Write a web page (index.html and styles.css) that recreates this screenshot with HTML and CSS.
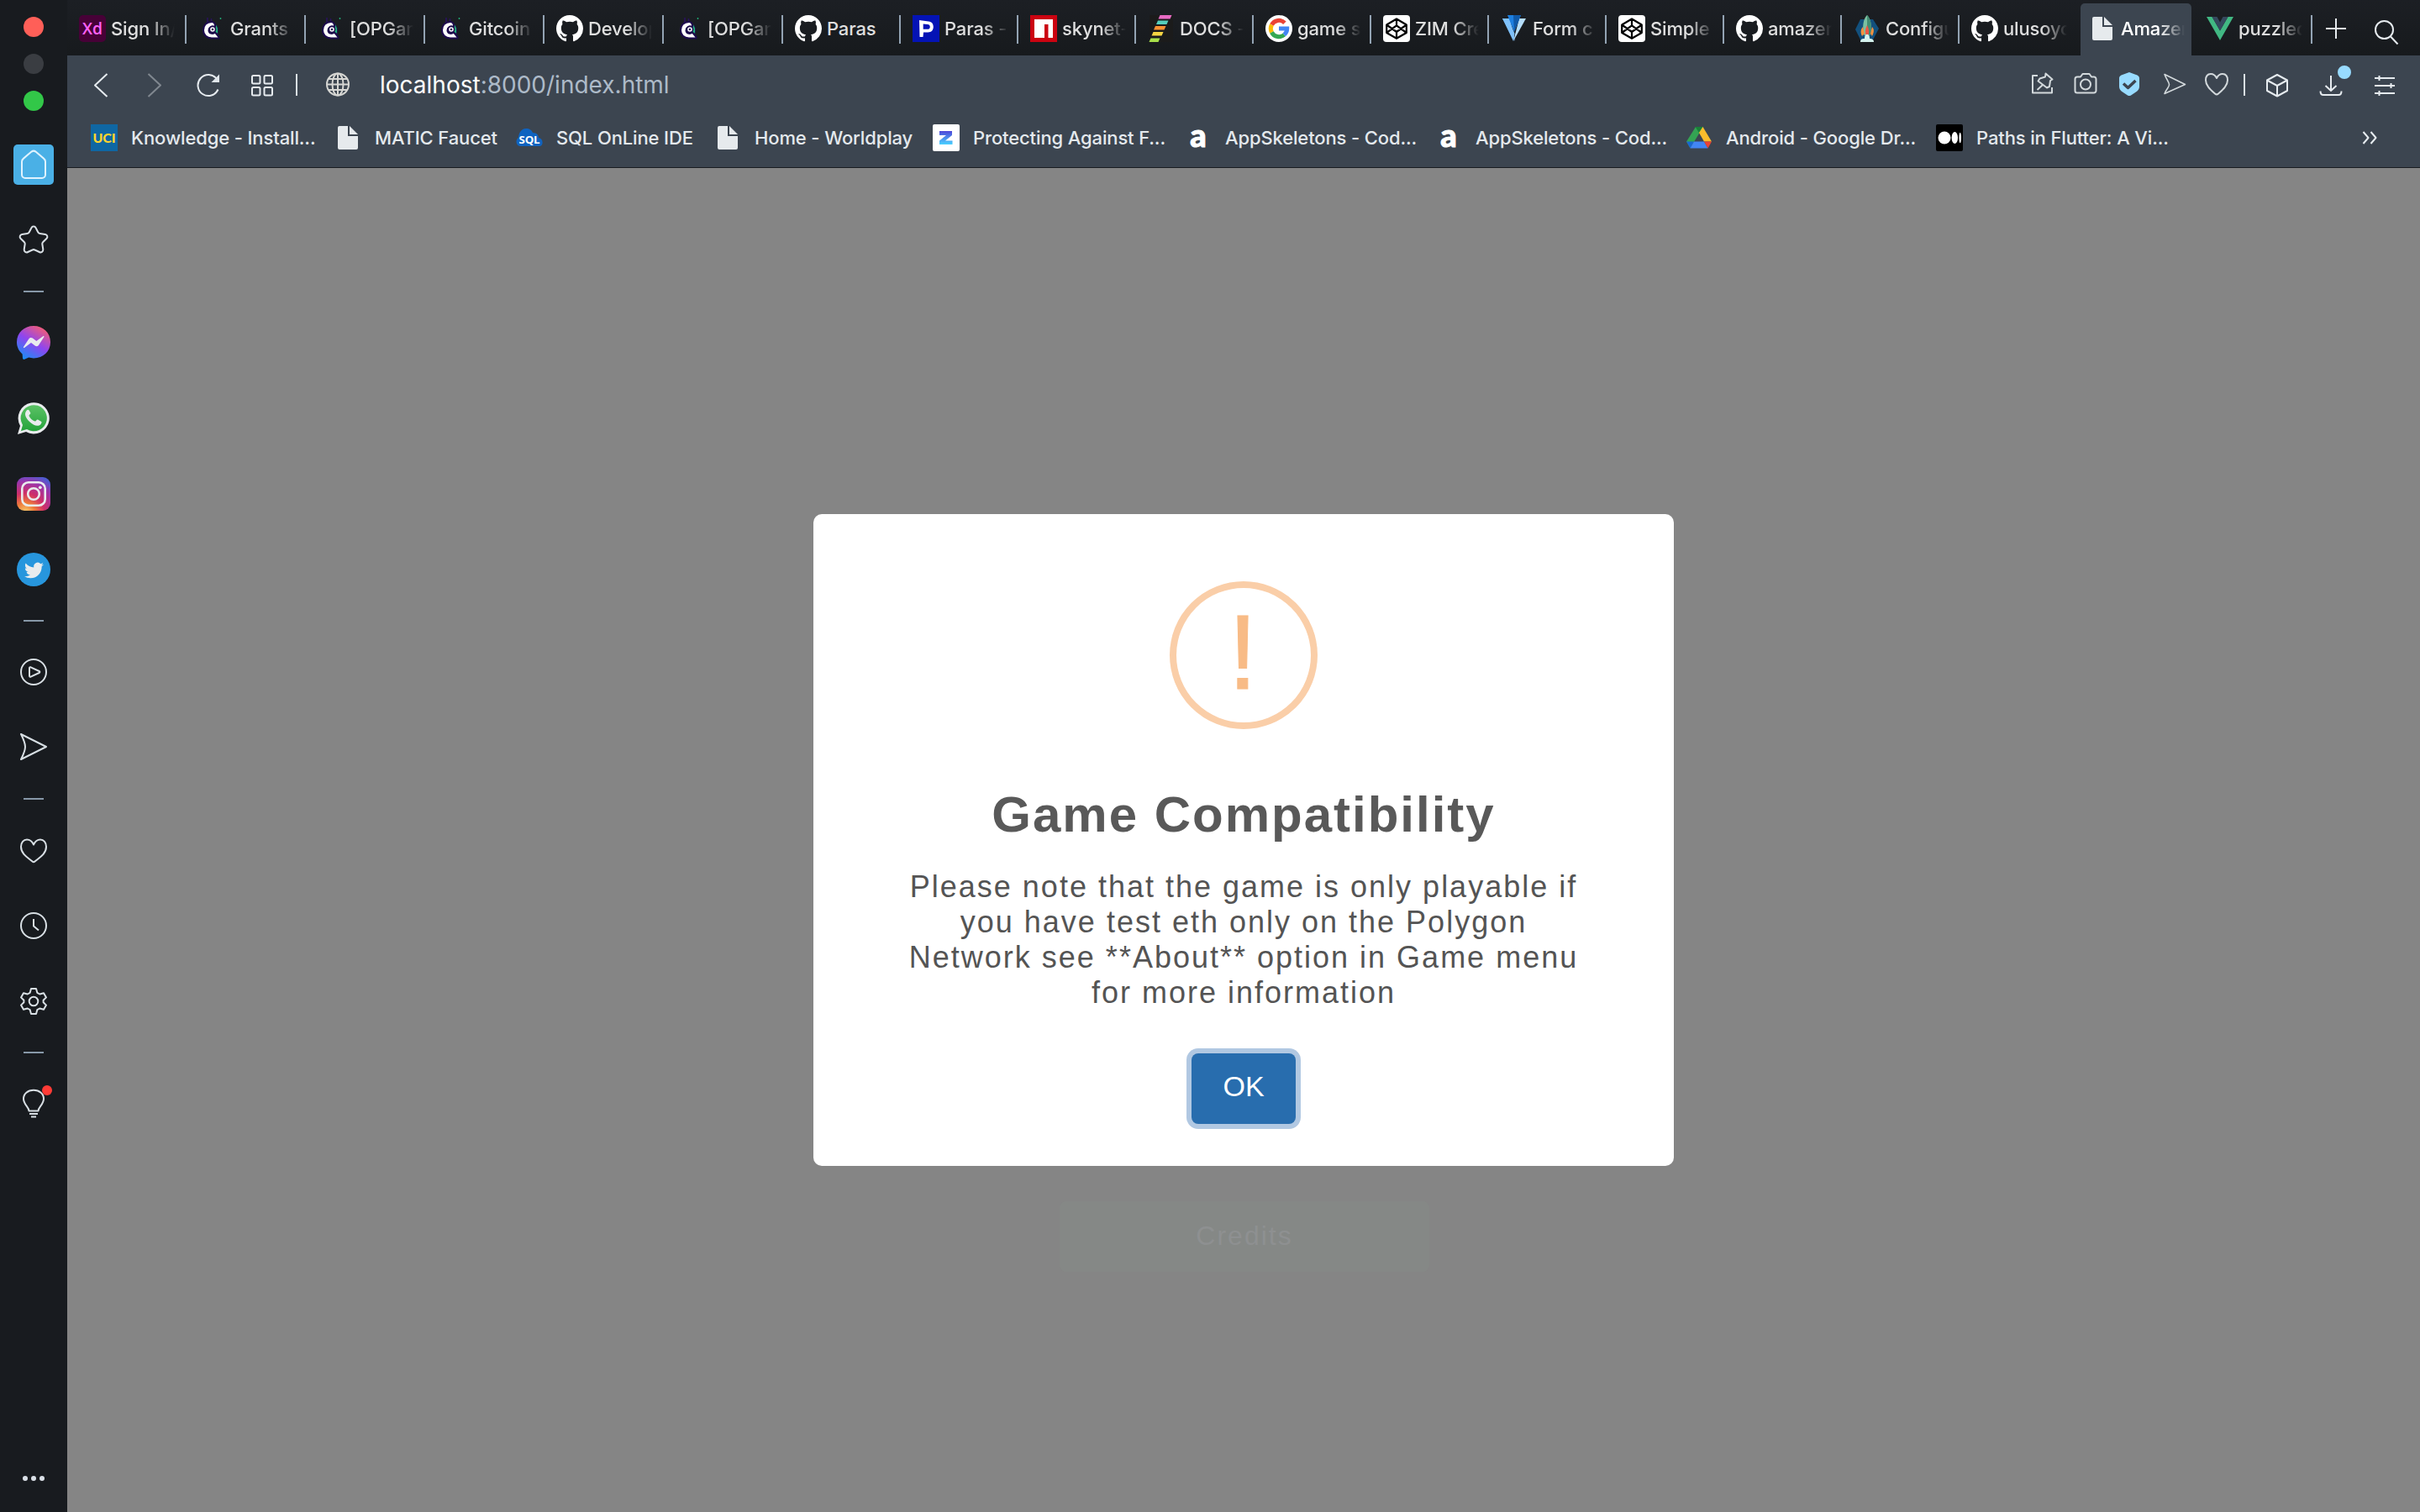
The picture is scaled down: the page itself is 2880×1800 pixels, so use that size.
FILE: index.html
```html
<!DOCTYPE html>
<html lang="en">
<head>
<meta charset="utf-8">
<title>Amazeng</title>
<link rel="stylesheet" href="styles.css">
</head>
<body>
<svg class="defs" width="0" height="0" aria-hidden="true">
  <defs>
    <linearGradient id="gMsg" x1="0.2" y1="1" x2="0.8" y2="0"><stop offset="0" stop-color="#1590f5"/><stop offset=".5" stop-color="#8f45ef"/><stop offset="1" stop-color="#fb5f6c"/></linearGradient>
    <linearGradient id="gWa" x1="0" y1="0" x2="0" y2="1"><stop offset="0" stop-color="#5cc266"/><stop offset="1" stop-color="#24a33a"/></linearGradient>
    <radialGradient id="gIg" cx=".25" cy="1.05" r="1.15"><stop offset="0" stop-color="#f7d070"/><stop offset=".25" stop-color="#ee7b3a"/><stop offset=".5" stop-color="#cf2f68"/><stop offset=".8" stop-color="#9a35ac"/><stop offset="1" stop-color="#4f5bd0"/></radialGradient>
    <linearGradient id="gZ" x1="0" y1="0" x2="0" y2="1"><stop offset="0" stop-color="#4f46d8"/><stop offset="1" stop-color="#4ad2ff"/></linearGradient>
    <symbol id="github" viewBox="0 0 16 16"><path fill="#fff" d="M8 0C3.58 0 0 3.58 0 8c0 3.54 2.29 6.53 5.47 7.59.4.07.55-.17.55-.38 0-.19-.01-.82-.01-1.49-2.01.37-2.53-.49-2.69-.94-.09-.23-.48-.94-.82-1.13-.28-.15-.68-.52-.01-.53.63-.01 1.08.58 1.23.82.72 1.21 1.87.87 2.33.66.07-.52.28-.87.51-1.07-1.78-.2-3.64-.89-3.64-3.95 0-.87.31-1.59.82-2.15-.08-.2-.36-1.02.08-2.12 0 0 .67-.21 2.2.82.64-.18 1.32-.27 2-.27.68 0 1.36.09 2 .27 1.53-1.04 2.2-.82 2.2-.82.44 1.1.16 1.92.08 2.12.51.56.82 1.27.82 2.15 0 3.07-1.87 3.75-3.65 3.95.29.25.54.73.54 1.48 0 1.07-.01 1.93-.01 2.2 0 .21.15.46.55.38A8.013 8.013 0 0016 8c0-4.42-3.58-8-8-8z"/></symbol>
    <symbol id="gitcoin" viewBox="0 0 32 32"><path d="M11 3v6M15.500 4v4" stroke="#2a1260" stroke-width="1.500"/><path d="M19.500 10.500c4 2 5 7 3.500 12L18 19z" fill="#22b57c" stroke="#1d0b4d" stroke-width="1"/><path d="M16 8C9.500 8 6 12.500 6 18s4 9.500 10 9.500h8.500V26L20 20.500c-3.500 3-7.500 1-7.500-2.500s3.500-5.500 7.500-4C20.500 10.500 18.500 8 16 8z" fill="#fff" stroke="#1d0b4d" stroke-width="2" stroke-linejoin="round"/><circle cx="17" cy="17" r="3.600" fill="#fff" stroke="#1d0b4d" stroke-width="1.600"/><circle cx="17" cy="17" r="1.300" fill="#1d0b4d"/><circle cx="26.500" cy="4" r=".9" fill="#22b57c"/></symbol>
    <symbol id="codepen" viewBox="0 0 32 32"><rect width="32" height="32" rx="4" fill="#fff"/><path d="M16 4.500 27.800 11.500v9.500L16 27.800 4.200 21v-9.500zM16 4.500v7.800m0 7.700v7.800M4.200 11.500 16 20l11.800-8.500M4.200 21 16 12.300 27.800 21" fill="none" stroke="#000" stroke-width="2.200" stroke-linejoin="round"/></symbol>
    <symbol id="page" viewBox="0 0 32 32"><path fill="#e6eaed" d="M6 2h10v12h12v14a2 2 0 0 1-2 2H6a2 2 0 0 1-2-2V4a2 2 0 0 1 2-2z"/><path fill="#e6eaed" d="M18 2l10 10H18z"/></symbol>
    <symbol id="lettera" viewBox="0 0 32 32"><text x="16" y="26.500" text-anchor="middle" font-family="Lato, sans-serif" font-weight="900" font-size="38" fill="#fff" stroke="#fff">a</text></symbol>
  </defs>
</svg>

<div class="browser">
  <aside class="sidebar">
    <div class="lights"><i class="light red"></i><i class="light gray"></i><i class="light green"></i></div>
    <nav class="side-items">
      <div class="side-item"><span class="home"><svg width="32" height="36" viewBox="0 0 32 36"><path d="M13.500 2.600a4 4 0 0 1 5 0l9.500 8a5 5 0 0 1 2 4V30a4 4 0 0 1-4 4H6a4 4 0 0 1-4-4V14.600a5 5 0 0 1 2-4z" fill="none" stroke="#dff3ff" stroke-width="2"/></svg></span></div>
      <div class="side-item"><svg class="line" width="40" height="40" viewBox="0 0 40 40"><path d="M17.400 5.300c1-2.400 4.200-2.400 5.200 0l2.700 5.200c.4.800 1 1.300 2 1.400l6.500 1.100c2.600.5 3.400 3.300 1.600 5l-4.300 4.300c-.6.600-.9 1.400-.8 2.200l1 6.400c.3 2.600-2.300 4.300-4.500 3.100l-5.400-2.500a3 3 0 0 0-2.800 0L13.200 34c-2.200 1.200-4.800-.5-4.500-3.100l1-6.400c.1-.8-.2-1.600-.8-2.200L4.600 18c-1.800-1.700-1-4.500 1.600-5l6.500-1.100c1-.1 1.600-.6 2-1.400z"/></svg></div>
      <hr class="side-rule">
      <div class="side-item"><svg width="40" height="40" viewBox="0 0 40 40"><path d="M20 0C8.600 0 0 8.200 0 19.200c0 5.800 2.500 10.700 6.600 14.200L7 38.500c.1 1.100 1.200 1.700 2.200 1.300l5-2.200c1.900.5 3.800.8 5.800.8 11.400 0 20-8.200 20-19.200S31.400 0 20 0z" fill="url(#gMsg)"/><path d="M8 25l6.300-9.600a3 3 0 0 1 4.500-.8l4.500 3.400 8-5.800c.7-.5 1.500.3 1 1l-6.200 9.500a3 3 0 0 1-4.500.8l-4.600-3.400-8 5.900c-.7.500-1.500-.3-1-1z" fill="#e9ecee"/></svg></div>
      <div class="side-item"><svg width="40" height="40" viewBox="0 0 40 40"><path d="M1 39l3-10A18.600 18.600 0 1 1 11 36z" fill="#e9ecee"/><path d="M5 35l2-7A15.600 15.600 0 1 1 12 33z" fill="url(#gWa)"/><path d="M14.600 10.600c-.6-1.300-2-.9-2.800-.1-4 4.400-.7 9.700 3.600 13.800 4.200 4 9.600 6.200 13 2.900.9-.9 1.500-2.400.9-3.100l-4.300-2.500c-1.500-.6-2 2.300-3.500 2-3-1-6-4-7-6.600-.1-1.400 2.300-1.900 1.800-3.400z" fill="#e9ecee"/></svg></div>
      <div class="side-item"><svg width="40" height="40" viewBox="0 0 40 40"><rect width="40" height="40" rx="9" fill="url(#gIg)"/><g fill="none" stroke="#e9ecee" stroke-width="2.600"><rect x="6.300" y="6.300" width="27.400" height="27.400" rx="7.500"/><circle cx="20" cy="20" r="6.800"/></g><circle cx="27.800" cy="12.300" r="1.900" fill="#e9ecee"/></svg></div>
      <div class="side-item"><svg width="40" height="40" viewBox="0 0 40 40"><circle cx="20" cy="20" r="20" fill="#2796dd"/><svg x="9" y="9.500" width="23" height="23" viewBox="0 0 24 24"><path fill="#e9ecee" d="M23.953 4.570a10 10 0 01-2.825.775 4.958 4.958 0 002.163-2.723c-.951.555-2.005.959-3.127 1.184a4.920 4.920 0 00-8.384 4.482C7.690 8.095 4.067 6.130 1.640 3.162a4.822 4.822 0 00-.666 2.475c0 1.710.870 3.213 2.188 4.096a4.904 4.904 0 01-2.228-.616v.060a4.923 4.923 0 003.946 4.827 4.996 4.996 0 01-2.212.085 4.936 4.936 0 004.604 3.417 9.867 9.867 0 01-6.102 2.105c-.390 0-.779-.023-1.170-.067a13.995 13.995 0 007.557 2.209c9.053 0 13.998-7.496 13.998-13.985 0-.210 0-.420-.015-.630A9.935 9.935 0 0024 4.590z"/></svg></svg></div>
      <hr class="side-rule">
      <div class="side-item"><svg class="line" width="40" height="40" viewBox="0 0 40 40"><circle cx="20" cy="20" r="15"/><path d="M15 15.500c0-1 .8-1.500 1.600-1.200l10 4.700c1 .5 1 1.500 0 2l-10 4.700c-.8.300-1.600-.2-1.600-1.200z"/></svg></div>
      <div class="side-item"><svg class="line up1" width="40" height="40" viewBox="0 0 40 40"><path d="M5 5l30 15L5 35c3-6 5-10 5-15S8 11 5 5z"/></svg></div>
      <hr class="side-rule">
      <div class="side-item"><svg class="line" width="40" height="40" viewBox="0 0 40 40"><path d="M20 13.500C17.500 8 14 7.500 12 7.500 8 7.500 5 11 5 16c0 9 9 13.500 13.500 17.500a2.200 2.200 0 0 0 3 0C26 29.500 35 25 35 16c0-5-3-8.500-7-8.500-2 0-5.500.5-8 6z"/></svg></div>
      <div class="side-item"><svg class="line" width="40" height="40" viewBox="0 0 40 40"><circle cx="20" cy="20" r="15"/><path d="M20 12v8.500l6 5"/></svg></div>
      <div class="side-item"><svg class="line" width="40" height="40" viewBox="0 0 40 40"><path d="M17 5h6l1.300 4.800 3 1.700 4.700-1.300 3 5.200-3.400 3.300v2.600l3.400 3.300-3 5.200-4.700-1.300-3 1.700L23 35h-6l-1.300-4.800-3-1.700L8 29.800l-3-5.200 3.400-3.300v-2.600L5 15.400l3-5.200 4.700 1.300 3-1.700z"/><circle cx="20" cy="20" r="5.300"/></svg></div>
      <hr class="side-rule">
      <div class="side-item"><svg class="line" width="40" height="40" viewBox="0 0 40 40"><path d="M14.500 28.500c0-4.500-6.500-7.500-6.500-14.500C8 8 13 3.800 20 3.800S32 8 32 14c0 7-6.500 10-6.500 14.500zM15 32h10M17 35.500h6"/></svg><i class="alert"></i></div>
    </nav>
    <div class="more"><i></i><i></i><i></i></div>
  </aside>

  <main class="window">
    <header class="chrome">
      <div class="tabs">
        <div class="tab wide"><svg class="fav" viewBox="0 0 32 32"><rect width="32" height="32" rx="5" fill="#470137"/><text x="16" y="22.500" text-anchor="middle" font-family="Open Sans, sans-serif" font-weight="600" font-size="20" textLength="24" lengthAdjust="spacingAndGlyphs" fill="#ff61f6">Xd</text></svg><span>Sign In/U</span></div>
        <div class="tab wide"><svg class="fav"><use href="#gitcoin"/></svg><span>Grants</span></div>
        <div class="tab wide"><svg class="fav"><use href="#gitcoin"/></svg><span>[OPGam</span></div>
        <div class="tab wide"><svg class="fav"><use href="#gitcoin"/></svg><span>Gitcoin</span></div>
        <div class="tab wide"><svg class="fav"><use href="#github"/></svg><span>Develop</span></div>
        <div class="tab wide"><svg class="fav"><use href="#gitcoin"/></svg><span>[OPGam</span></div>
        <div class="tab"><svg class="fav"><use href="#github"/></svg><span class="full">Paras</span></div>
        <div class="tab"><svg class="fav" viewBox="0 0 32 32"><rect width="32" height="32" fill="#0413b5"/><path d="M8 6l11 1.500c4 .5 5.800 2.800 5.800 6.500s-2.300 6.500-6.500 6.500H13l-.5 5.500H8.500zM12.700 10.500v6.300h4.800c2 0 3.300-.9 3.300-2.900s-1.200-2.700-3-2.900z" fill="#fff" fill-rule="evenodd"/></svg><span>Paras -</span></div>
        <div class="tab"><svg class="fav" viewBox="0 0 32 32"><rect width="32" height="32" fill="#cb0311"/><path d="M5 5h22v22h-5.500V11H17v16H5z" fill="#fff"/></svg><span>skynet-</span></div>
        <div class="tab"><svg class="fav" viewBox="0 0 32 32"><rect x="2" width="28" height="32" fill="#1b1b1b"/><path d="M14.500 0h14l-2 4.500h-14z" fill="#e86bc4"/><path d="M12 6.500h12.500l-2 4.500H10z" fill="#55cdbb"/><path d="M9 13h12.500l-2 4.500H7z" fill="#fa9132"/><path d="M6.500 20h12l-2 4.500H4.500z" fill="#f5d543"/><path d="M3.500 27.500h11l-2 4.500H1.500z" fill="#a8e04a"/></svg><span>DOCS -</span></div>
        <div class="tab"><svg class="fav" viewBox="0 0 32 32"><circle cx="16" cy="16" r="16" fill="#fff"/><g fill="none" stroke-width="5"><path d="M7.400 11.500A9.700 9.700 0 0 1 22.900 9.200" stroke="#ea4335"/><path d="M7.400 20.500a9.700 9.700 0 0 1 0-9" stroke="#fbbc05"/><path d="M22.300 23.400a9.700 9.700 0 0 1-14.900-2.900" stroke="#34a853"/><path d="M16 16h9.700c0 3-1.300 5.600-3.400 7.400" stroke="#4285f4"/></g></svg><span>game s</span></div>
        <div class="tab"><svg class="fav"><use href="#codepen"/></svg><span>ZIM Cre</span></div>
        <div class="tab"><svg class="fav" viewBox="0 0 32 32"><path d="M2 4h9l6 27z" fill="#7fc1fb"/><path d="M30 4h-8l-7 27z" fill="#b5defc"/><path d="M8 0h16l-8 20z" fill="#1d7fe0"/><path d="M15 0h9l-8 20z" fill="#1059a8"/><path d="M2 4h7l7.500 18L15 31z" fill="#7fc1fb"/></svg><span>Form c</span></div>
        <div class="tab"><svg class="fav"><use href="#codepen"/></svg><span>Simple</span></div>
        <div class="tab"><svg class="fav"><use href="#github"/></svg><span>amazen</span></div>
        <div class="tab"><svg class="fav" viewBox="0 0 32 32"><path d="M8 5h15l7 11-8 15H9L2 17z" fill="#12507d"/><path d="M16 0c5 5 6 14 3.500 24h-7C10 14 11 5 16 0z" fill="#7bc0a1"/><path d="M16 0c5 5 6 14 3.500 24H16z" fill="#438c72"/><path d="M11 14c-3 3-3 7-1 11l3-3zM22 14c3 3 2 7 0 11l-2-3z" fill="#f4923f"/><path d="M16 12c2 4 3 8 1 13h-2c-2-5-1-9 1-13z" fill="#ee5545"/><path d="M8 32c0-4 3-4 5-4 0-4 1-5 3-5s3 1 3 5c3 0 5 1 5 4z" fill="#d5f3ee"/></svg><span>Configu</span></div>
        <div class="tab plain"><svg class="fav"><use href="#github"/></svg><span>ulusoyc</span></div>
        <div class="tab active"><svg class="fav"><use href="#page"/></svg><span>Amazen</span></div>
        <div class="tab"><svg class="fav" viewBox="0 0 32 32"><path d="M0 2h6.500L16 18.500 25.500 2H32L16 30z" fill="#41b883"/><path d="M6.500 2h6L16 8.500 19.500 2h6L16 18.500z" fill="#35495e"/></svg><span>puzzled</span></div>
        <div class="tab-tools">
          <svg class="ico" viewBox="0 0 32 32"><path d="M16 4v24M4 16h24"/></svg>
          <svg class="ico search" viewBox="0 0 32 32"><circle cx="13.500" cy="13.500" r="10.500"/><path d="M21 21.500l8.500 9"/></svg>
        </div>
      </div>

      <div class="toolbar">
        <div class="nav">
          <svg class="ico" viewBox="0 0 32 32"><path d="M23.500 3L9 16.500 23.500 30"/></svg>
          <svg class="ico dim" viewBox="0 0 32 32"><path d="M8.500 3L23 16.500 8.500 30"/></svg>
          <svg class="ico" viewBox="0 0 32 32"><path d="M27.500 21.500A12.500 12.500 0 1 1 26 9"/><path d="M29 3.500V13h-9.500z" fill="#e0e6eb" stroke="none"/></svg>
          <svg class="ico" viewBox="0 0 32 32"><rect x="4" y="5" width="9.500" height="9.500" rx="1.500"/><rect x="18.500" y="5" width="9.500" height="9.500" rx="1.500"/><rect x="4" y="19" width="9.500" height="9.500" rx="1.500"/><rect x="18.500" y="19" width="9.500" height="9.500" rx="1.500"/></svg>
          <i class="bar"></i>
          <svg class="ico globe" viewBox="0 0 32 32"><circle cx="16" cy="15.500" r="13"/><ellipse cx="16" cy="15.500" rx="6.500" ry="13"/><path d="M16 2.500v26M3 15.500h26M5 9h22M5 22h22"/></svg>
          <span class="url"><b>localhost</b>:8000/index.html</span>
        </div>
        <div class="actions">
          <svg class="ico soft pin" viewBox="0 0 32 32"><path d="M11 5H5v20.500h23V19"/><path d="M20.500 2.500l8 7-2.500 1.500-1 7-3 1.500-10.500-8 2-3 6.500-2zM17 16l-6.500 6"/></svg>
          <svg class="ico soft" viewBox="0 0 32 32"><path d="M6 6.500h4l2.500-3.500h8L23 6.500h3a2.500 2.500 0 0 1 2.500 2.500v14a2.500 2.500 0 0 1-2.500 2.500H6A2.500 2.500 0 0 1 3.500 23V9A2.500 2.500 0 0 1 6 6.500z"/><circle cx="16" cy="15.500" r="6"/></svg>
          <svg class="ico" viewBox="0 0 32 32"><path d="M16 1l9.500 3.500C27 5.200 28 6.500 28 8v10c0 3-1.500 5-4 6.500l-6 4a4 4 0 0 1-4 0l-6-4C5.500 23 4 21 4 18V8c0-1.500 1-2.800 2.500-3.500z" fill="#98dbff" stroke="none"/><path d="M9 14.500l5.500 5L23.500 11" stroke="#3c4550" stroke-width="3.500"/></svg>
          <svg class="ico soft thin send" viewBox="0 0 32 32"><path d="M4 3.500l24.500 12L4 26.500c3-7 6-8 5.500-11C9 12 6.500 10 4 3.500z"/></svg>
          <svg class="ico soft heart" viewBox="0 0 32 32"><path d="M16 8c-2-4-4.500-5-7-5-4 0-6 3-6 7.500C3 17 9 22 14 26.500a3 3 0 0 0 4 0C23 22 29 17 29 10.500 29 6 27 3 23 3c-2.500 0-5 1-7 5z"/></svg>
          <i class="bar"></i>
          <svg class="ico cube" viewBox="0 0 32 32"><path d="M16 4l12 6.500v12.500L16 29.500 4 23V10.500zM4 10.500L16 17l12-6.500M16 17v12.500"/></svg>
          <span class="download"><svg class="ico" viewBox="0 0 32 32"><path d="M16 5v18M9.500 17l6.500 6 6.500-6M3.500 23.500c0 3 1 4.500 3.500 4.500h18c2.500 0 3.500-1.500 3.500-4.500"/></svg><i class="badge"></i></span>
          <svg class="ico sliders" viewBox="0 0 32 32"><path d="M4 8h24M4 17h24M4 26h24M9.500 5v6M23.500 14v6M9.500 23v6"/></svg>
        </div>
      </div>

      <div class="bookmarks">
        <div class="mark w290"><svg class="fav" viewBox="0 0 32 32"><rect width="32" height="32" fill="#0f67a3"/><text x="16" y="21.500" text-anchor="middle" font-family="Lato, sans-serif" font-weight="900" font-size="15" textLength="27" lengthAdjust="spacingAndGlyphs" fill="#ffd52e">UCI</text></svg><span>Knowledge - Install...</span></div>
        <div class="mark w216"><svg class="fav"><use href="#page"/></svg><span>MATIC Faucet</span></div>
        <div class="mark w236"><svg class="fav" viewBox="0 0 32 32"><path d="M5 26c-5 0-6-8-2-10 0-5 3-11 9-11 4 0 7 2 8 5 5 0 7 3 7 6 6 1 6 10 1 10z" fill="#0f63c0"/><text x="16" y="23" text-anchor="middle" font-family="Open Sans, sans-serif" font-weight="700" font-size="12.500" textLength="25" lengthAdjust="spacingAndGlyphs" fill="#fff">SQL</text></svg><span>SQL OnLine IDE</span></div>
        <div class="mark w260"><svg class="fav"><use href="#page"/></svg><span>Home - Worldplay</span></div>
        <div class="mark w300"><svg class="fav" viewBox="0 0 32 32"><rect width="32" height="32" rx="2" fill="#fff"/><path d="M8 8h15v5l-8 6.500h8.500V24H8v-4.500l8-6.500H8z" fill="url(#gZ)"/></svg><span>Protecting Against F...</span></div>
        <div class="mark w298"><svg class="fav"><use href="#lettera"/></svg><span>AppSkeletons - Cod...</span></div>
        <div class="mark w298"><svg class="fav"><use href="#lettera"/></svg><span>AppSkeletons - Cod...</span></div>
        <div class="mark w298"><svg class="fav" viewBox="0 0 32 32"><path d="M12 3h9l-12 19.500-3.500 6L1 20.500z" fill="#34a353"/><path d="M11.500 3h9L16 10z" fill="#188038"/><path d="M20.500 3L31 20.500h-9L16 10z" fill="#fbbc2c"/><path d="M1 20.500h9L5.500 28.500z" fill="#1967d2"/><path d="M10 20.500h12l4.500 8h-21z" fill="#4285f4"/><path d="M22 20.500h9l-4.500 8z" fill="#ea4335"/></svg><span>Android - Google Dr...</span></div>
        <div class="mark w298"><svg class="fav" viewBox="0 0 32 32"><rect width="32" height="32" rx="2" fill="#000"/><ellipse cx="10" cy="16" rx="7.500" ry="7.500" fill="#fff"/><ellipse cx="22.300" cy="16" rx="3.700" ry="7" fill="#fff"/><ellipse cx="28.700" cy="16" rx="1.300" ry="6.300" fill="#fff"/></svg><span>Paths in Flutter: A Vi...</span></div>
        <svg class="ico overflow" viewBox="0 0 32 32"><path d="M8.500 9l6 7-6 7M17.500 9l6 7-6 7"/></svg>
      </div>
    </header>

    <section class="page">
      <div class="game-button">Credits</div>
      <div class="overlay">
        <div class="dialog">
          <div class="warn">!</div>
          <h2>Game Compatibility</h2>
          <p>Please note that the game is only playable if<br>you have test eth only on the Polygon<br>Network see **About** option in Game menu<br>for more information</p>
          <button class="ok">OK</button>
        </div>
      </div>
    </section>
  </main>
</div>
</body>
</html>
```
FILE: styles.css
```css
* { box-sizing: border-box; }
body { margin: 0; background: #858585; font-family: Inter, sans-serif; }
.defs { display: block; position: absolute; }
svg { display: block; flex: none; }
.browser { display: flex; width: 2880px; height: 1800px; overflow: hidden; }

/* Sidebar */
.sidebar { width: 80px; flex: none; background: #181b1f; display: flex; flex-direction: column; align-items: center; }
.lights { display: flex; flex-direction: column; gap: 20px; padding-top: 20px; height: 151px; }
.light { width: 24px; height: 24px; border-radius: 50%; }
.red { background: #ff5f58; }
.gray { background: #3a3d42; }
.green { background: #32c748; }
.side-items { width: 80px; }
.side-item { height: 90px; display: flex; align-items: center; justify-content: center; position: relative; }
.side-rule { width: 24px; height: 2px; margin: 15px auto; border: 0; background: #8798a8; }
.home { width: 48px; height: 48px; border-radius: 5px; background: #4ab0e6; display: flex; align-items: center; justify-content: center; }
.line { fill: none; stroke: #d8dfe4; stroke-width: 2; stroke-linejoin: round; }
.up1 { margin-bottom: 2px; }
.alert { position: absolute; left: 50px; top: 23px; width: 12px; height: 12px; border-radius: 50%; background: #ff3b36; }
.more { margin-top: auto; padding-bottom: 37px; display: flex; gap: 4px; }
.more i { width: 6px; height: 6px; border-radius: 50%; background: #d9dfe6; }

/* Browser chrome */
.window { flex: 1; min-width: 0; display: flex; flex-direction: column; }
.chrome { height: 200px; flex: none; background: #3c4550; border-bottom: 1px solid #191c20; }
.tabs { height: 66px; display: flex; background: linear-gradient(#1c1f24, #171a1d); }
.tab { width: 140px; height: 68px; padding: 0 0 0 14px; display: flex; align-items: center; gap: 6px; flex: none; position: relative; }
.tab::after { content: ""; position: absolute; right: 0; top: 18px; width: 2px; height: 34px; background: #93a3b3; }
.tab.wide { width: 142px; }
.tab.plain::after, .tab.active::after { display: none; }
.tab span { width: 76px; overflow: hidden; white-space: nowrap; font-size: 22px; line-height: 32px; color: #dfdfdf; font-weight: 450; letter-spacing: -0.15px; -webkit-mask-image: linear-gradient(90deg, #000 60%, transparent); mask-image: linear-gradient(90deg, #000 60%, transparent); }
.tab span.full { -webkit-mask-image: none; mask-image: none; }
.tab.active::before { content: ""; position: absolute; left: 4px; right: 4px; top: 4px; bottom: 0; background: #3c4550; border-radius: 5px 5px 0 0; z-index: 0; }
.tab.active > * { position: relative; z-index: 1; }
.tab.active span { color: #fff; }
.fav { width: 32px; height: 32px; }
.tab-tools { flex: 1; display: flex; justify-content: space-between; padding: 18px 24px 0 12px; }
.tab-tools .search { margin-top: 4px; }
.ico { width: 32px; height: 32px; fill: none; stroke: #e6ebef; stroke-width: 2; stroke-linejoin: round; }
.dim { opacity: .4; }
.soft { stroke: #d3d9dc; }
.thin { stroke-width: 1.6; }
.toolbar { height: 70px; padding: 0 26px 0 24px; display: flex; justify-content: space-between; align-items: center; }
.nav, .actions { display: flex; align-items: center; }
.nav .ico + .ico { margin-left: 32px; }
.bar { width: 2px; height: 26px; background: #d9dfe3; }
.nav .bar { margin: 0 32px 0 24px; }
.globe { stroke: #d6d6d3; }
.url { margin-left: 34px; font-size: 28px; line-height: 36px; padding-bottom: 1px; color: #adbac8; letter-spacing: 0; }
.url b { font-weight: 400; color: #fff; }
.pin { margin-right: 20px; }
.pin + .soft { margin-right: 20px; }
.send { margin: 0 18px 0 22px; }
.actions .bar { margin: 0 22px 0 16px; }
.download { position: relative; margin: 0 32px; }
.badge { position: absolute; left: 24px; top: -7px; width: 16px; height: 16px; border-radius: 50%; background: #98dbff; }
.bookmarks { height: 56px; padding: 0 44px 0 28px; display: flex; align-items: center; }
.mark { display: flex; align-items: center; gap: 16px; flex: none; font-size: 22px; line-height: 32px; white-space: nowrap; color: #e4e9ed; font-weight: 450; letter-spacing: -0.13px; }
.w216 { width: 216px; } .w236 { width: 236px; } .w260 { width: 260px; }
.w290 { width: 290px; } .w298 { width: 298px; } .w300 { width: 300px; }
.overflow { margin-left: auto; }

/* Game page and dialog */
.page { flex: 1; position: relative; background: #858585; padding-top: 1230px; font-family: "Liberation Sans", Arial, sans-serif; }
.game-button { width: 440px; height: 84px; margin: 0 auto; position: relative; left: 1px; border-radius: 8px; background: #858886; color: #8e9091; font-size: 32px; line-height: 82px; letter-spacing: 2px; text-align: center; }
.overlay { position: absolute; inset: 0; display: flex; align-items: center; justify-content: center; }
.dialog { width: 1024px; height: 776px; border-radius: 10px; background: #fff; padding-top: 80px; display: flex; flex-direction: column; align-items: center; color: #565656; }
.warn { width: 176px; height: 176px; padding-right: 2px; border: 8px solid #facea8; border-radius: 50%; color: #f8bb86; font-size: 126px; line-height: 154px; text-align: center; -webkit-text-stroke: 1px #f8bb86; }
.dialog h2 { margin: 68px 0 31px; font-size: 60px; line-height: 68px; font-weight: 700; letter-spacing: 2px; color: #595959; }
.dialog p { margin: 0; font-size: 36px; line-height: 42px; letter-spacing: 2px; text-align: center; color: #545454; }
.ok { margin-top: 51px; width: 124px; height: 84px; padding: 0 0 5px; border: 0; border-radius: 8px; background: #286dae; box-shadow: 0 0 0 6px #b1c8e2; color: #fff; font: 34px "Liberation Sans", Arial, sans-serif; }
```
